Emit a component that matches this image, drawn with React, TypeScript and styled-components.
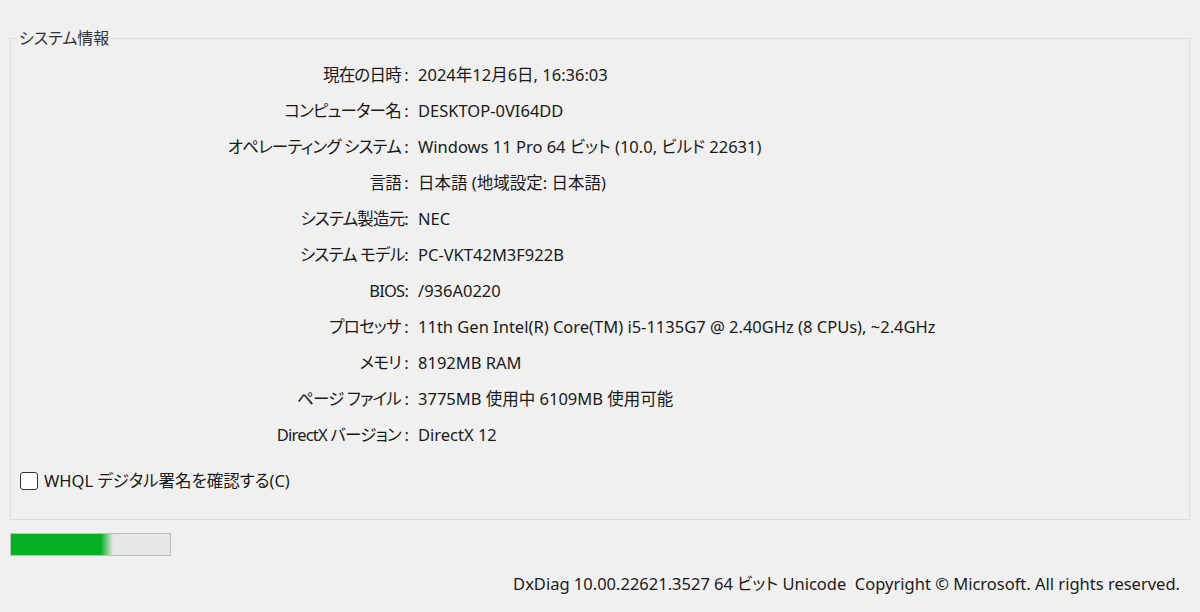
import React from "react";
import styled, { createGlobalStyle } from "styled-components";

const GlobalStyle = createGlobalStyle`
  html, body {
    margin: 0;
    padding: 0;
    background: #f0f0f0;
  }
  body {
    font-family: "Noto Sans", "Noto Sans CJK JP", sans-serif;
    font-feature-settings: "palt";
    color: #1a1a1a;
  }
`;

const rows: [string, string][] = [
  ["現在の日時 :", "2024年12月6日, 16:36:03"],
  ["コンピューター名 :", "DESKTOP-0VI64DD"],
  ["オペレーティング システム :", "Windows 11 Pro 64 ビット (10.0, ビルド 22631)"],
  ["言語 :", "日本語 (地域設定: 日本語)"],
  ["システム製造元:", "NEC"],
  ["システム モデル:", "PC-VKT42M3F922B"],
  ["BIOS:", "/936A0220"],
  ["プロセッサ :", "11th Gen Intel(R) Core(TM) i5-1135G7 @ 2.40GHz (8 CPUs), ~2.4GHz"],
  ["メモリ :", "8192MB RAM"],
  ["ページ ファイル :", "3775MB 使用中 6109MB 使用可能"],
  ["DirectX バージョン :", "DirectX 12"],
];

function App() {
  return (
    <Page>
      <GlobalStyle />
      <GroupBox>
        <Legend>システム情報</Legend>
        <InfoGrid>
          {rows.map(([label, value]) => (
            <React.Fragment key={label}>
              <Label>{label}</Label>
              <Value>{value}</Value>
            </React.Fragment>
          ))}
        </InfoGrid>
        <CheckRow>
          <CheckBox />
          <span>WHQL デジタル署名を確認する(C)</span>
        </CheckRow>
      </GroupBox>
      <Progress>
        <ProgressFill $percent={64} />
      </Progress>
      <Footer>DxDiag 10.00.22621.3527 64 ビット Unicode&nbsp; Copyright © Microsoft. All rights reserved.</Footer>
    </Page>
  );
}
export default App;

const Page = styled.div`
  width: 1200px;
  height: 612px;
  padding: 0 10px;
  box-sizing: border-box;
  overflow: hidden;
`;

const GroupBox = styled.fieldset`
  margin: 28px 0 0;
  padding: 0 0 30px;
  height: 492px;
  box-sizing: border-box;
  border: 1px solid #dcdcdc;
  min-width: 0;
`;

const Legend = styled.legend`
  margin-left: 6px;
  padding: 0 2px;
  font-size: 16px;
  line-height: 20px;
  color: #333;
`;

const InfoGrid = styled.div`
  display: grid;
  grid-template-columns: 397px 1fr;
  column-gap: 10px;
  margin-top: 9px;
  font-size: 16.5px;
`;

const Label = styled.div`
  height: 36px;
  line-height: 36px;
  text-align: right;
  white-space: nowrap;
  letter-spacing: -0.8px;
`;

const Value = styled.div`
  height: 36px;
  line-height: 36px;
  white-space: nowrap;
`;

const CheckRow = styled.div`
  display: flex;
  align-items: center;
  gap: 6px;
  margin: 18px 0 0 9px;
  font-size: 16.5px;
  line-height: 20px;
`;

const CheckBox = styled.span`
  width: 16px;
  height: 16px;
  border: 1px solid #333;
  border-radius: 3px;
  background: #fff;
  box-sizing: content-box;
`;

const Progress = styled.div`
  margin-top: 13px;
  width: 161px;
  height: 23px;
  box-sizing: border-box;
  border: 1px solid #bcbcbc;
  background: #e6e6e6;
`;

const ProgressFill = styled.div<{ $percent: number }>`
  height: 100%;
  width: ${(p) => p.$percent}%;
  background: linear-gradient(to right, #06b025 0%, #06b025 88%, #e6e6e6 100%);
`;

const Footer = styled.div`
  margin-top: 16px;
  padding-right: 10px;
  text-align: right;
  font-size: 16.5px;
  line-height: 24px;
  white-space: nowrap;
`;
